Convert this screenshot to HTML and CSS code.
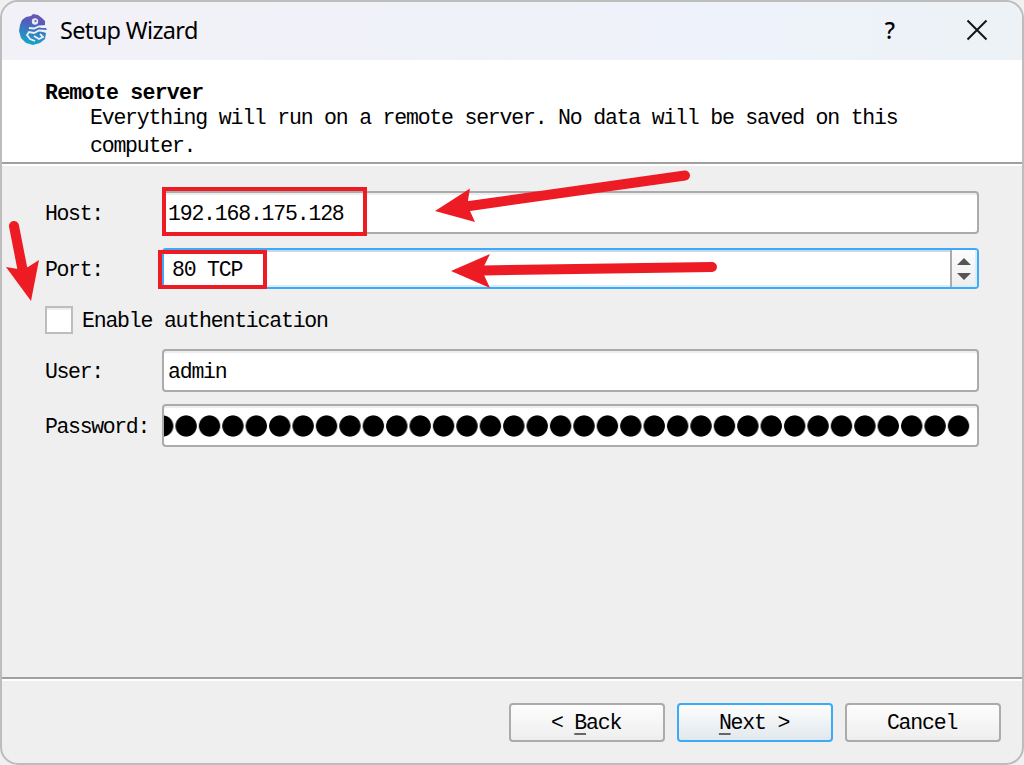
FILE: index.html
```html
<!DOCTYPE html>
<html lang="en">
<head>
<meta charset="utf-8">
<title>Setup Wizard</title>
<link rel="stylesheet" href="styles.css">
</head>
<body>
<main class="window">
  <header class="titlebar">
    <svg class="logo" width="30" height="34" viewBox="0 0 30 34">
      <defs><linearGradient id="g" x1="0.6" y1="0" x2="0.4" y2="1"><stop offset="0" stop-color="#7650b5"/><stop offset=".3" stop-color="#4f60b9"/><stop offset=".65" stop-color="#2f86c5"/><stop offset="1" stop-color="#16a6c9"/></linearGradient></defs>
      <path fill="url(#g)" d="M12 3 14 1 19 2 23 5 26 8 26 12 21 15 27 15 28 17 21 18 27 20 26 26 21 30 14 32 7 30 2 25 0 18 1 12 3 7 7 4Z"/>
      <circle cx="16" cy="8.500" r="3.200" fill="#e6e9f6"/><circle cx="16.500" cy="8" r="1.100" fill="#5966ad"/>
      <path fill="none" stroke="#eef1f8" stroke-width="1.800" d="M29 13 20 13.500 15 15.500 10 15M29 18 20 17.500 15 20 10 19 8 22 11 26 16 28M21 21 24 24 20 26 15 23"/>
    </svg>
    <h1 class="title">Setup Wizard</h1>
    <span class="help">?</span>
    <svg class="close" width="22" height="22" viewBox="0 0 22 22"><path d="M1.500 1.500 20.500 20.500M20.500 1.500 1.500 20.500" fill="none" stroke="#151515" stroke-width="2"/></svg>
  </header>
  <section class="intro">
    <h2 class="heading">Remote server</h2>
    <p class="description">Everything will run on a remote server. No data will be saved on this<br>computer.</p>
  </section>
  <form class="form">
    <div class="row host"><label>Host:</label><div class="field">192.168.175.128</div></div>
    <div class="row port"><label>Port:</label><div class="field focused"><span>80 TCP</span><span class="spinner"><svg width="16" height="24" viewBox="0 0 16 24"><path fill="#555" d="M0 8 7 1 14 8ZM0 16H14L7 23Z"/></svg></span></div></div>
    <div class="check"><span class="box"></span><span class="caption">Enable authentication</span></div>
    <div class="row user"><label>User:</label><div class="field">admin</div></div>
    <div class="row password"><label>Password:</label><div class="field"><span class="dots"></span></div></div>
  </form>
  <footer class="footer">
    <button class="button"><span>&lt; <u>B</u>ack</span></button>
    <button class="button primary"><span><u>N</u>ext &gt;</span></button>
    <button class="button"><span>Cancel</span></button>
  </footer>
</main>
<svg class="annotations" width="1024" height="765" viewBox="0 0 1024 765">
  <g fill="none" stroke="#ed1c24" stroke-width="4"><rect x="164" y="189" width="201" height="45"/><rect x="160" y="252" width="105" height="35"/></g>
  <g fill="none" stroke="#ed1c24" stroke-width="10" stroke-linecap="round"><path d="M685 175.500 466 206.500M712 267 482 270.500M14 226 23 272"/></g>
  <g fill="#ed1c24"><path d="M435 211 470 188.500 468 200 470 211 475 222ZM451 271 490 254 484 266 484 275 490 288ZM31 301 6 267 18 269 28 267 39 260Z"/></g>
</svg>
</body>
</html>
```
FILE: styles.css
```css
* { box-sizing: border-box; }
body { margin: 0; width: 1024px; height: 765px; overflow: hidden; background: #f0f0f0; color: #000; font: 21.5px/28px "Liberation Mono", monospace; letter-spacing: -1.2px; }
.window { display: flex; flex-direction: column; width: 1024px; height: 765px; border: 2px solid #bdbdbd; border-radius: 18px; overflow: hidden; background: #efefef; }
.titlebar { display: flex; align-items: center; height: 58px; flex: none; padding: 0 34px 2px 17px; background: linear-gradient(90deg, #f2f1f7, #eef2fa 75%, #edf2f6); font-family: "Noto Sans", sans-serif; letter-spacing: 0; }
.title { flex: 1; margin: 0 0 0 11px; font-size: 23.5px; font-weight: 400; line-height: 32px; letter-spacing: -.65px; }
.help { margin-right: 71px; font-size: 23px; font-weight: 500; }
.intro { flex: none; height: 106px; padding: 21px 42px 0 43px; background: #fff; border-bottom: 2px solid #fff; box-shadow: inset 0 -2px #a0a0a0; }
.heading { margin: 0; font-size: inherit; line-height: 24px; letter-spacing: -.72px; }
.description { margin: -1px 0 0 45px; white-space: nowrap; }
.form { display: flex; flex-direction: column; flex: 1; padding: 25px 43px 0; }
.row { display: grid; grid-template-columns: 117px 817px; align-items: center; height: 43px; flex: none; }
.row label { padding-top: 2px; letter-spacing: -1.35px; }
.field { display: flex; align-items: center; height: 100%; padding: 2px 0 0 4px; border: 2px solid #ababab; border-radius: 4px; background: #fff; box-shadow: inset 0 2px #eee; overflow: hidden; }
.port { height: 41px; margin-top: 14px; }
.focused { justify-content: space-between; padding: 0 0 0 8px; border-color: #3daaf8; box-shadow: inset 0 2px #c7d9e7, inset 0 -2px #dcecf8; }
.focused > span:first-child { padding-top: 2px; }
.spinner { display: flex; align-items: center; justify-content: center; width: 27px; height: 100%; border-left: 2px solid #ababab; box-shadow: inset -2px -2px #dcecf8; background: linear-gradient(#fcfcfc, #eee); }
.check { display: flex; align-items: center; gap: 9px; height: 28px; margin-top: 17px; }
.caption { padding-top: 2px; }
.box { width: 28px; height: 28px; border: 2px solid #bdbdbd; background: #fff; box-shadow: inset 0 2px #eee; }
.user { margin-top: 15px; }
.password { margin-top: 12px; }
.password .field { padding: 0 6px 0 0; }
.dots { width: 100%; height: 24px; background: radial-gradient(circle at center, #000 10.2px, transparent 11px) -13px 0 / 23.42px 24px repeat-x; }
.footer { display: flex; justify-content: flex-end; gap: 12px; flex: none; height: 86px; padding: 22px 21px 0 0; border-top: 2px solid #a0a0a0; box-shadow: inset 0 2px #fff; }
.button { width: 156px; height: 39px; margin-top: 2px; padding: 0 2px 0 0; border: 2px solid #ababab; border-radius: 4px; background: linear-gradient(#fdfdfd, #eee); color: #000; font: inherit; letter-spacing: inherit; }
.primary { border-color: #3daaf8; background: linear-gradient(#fdfdfd, #e1e8ed); }
.button u { text-underline-offset: 4px; text-decoration-color: #666; text-decoration-thickness: 2px; }
.annotations { position: absolute; inset: 0; pointer-events: none; }
```
